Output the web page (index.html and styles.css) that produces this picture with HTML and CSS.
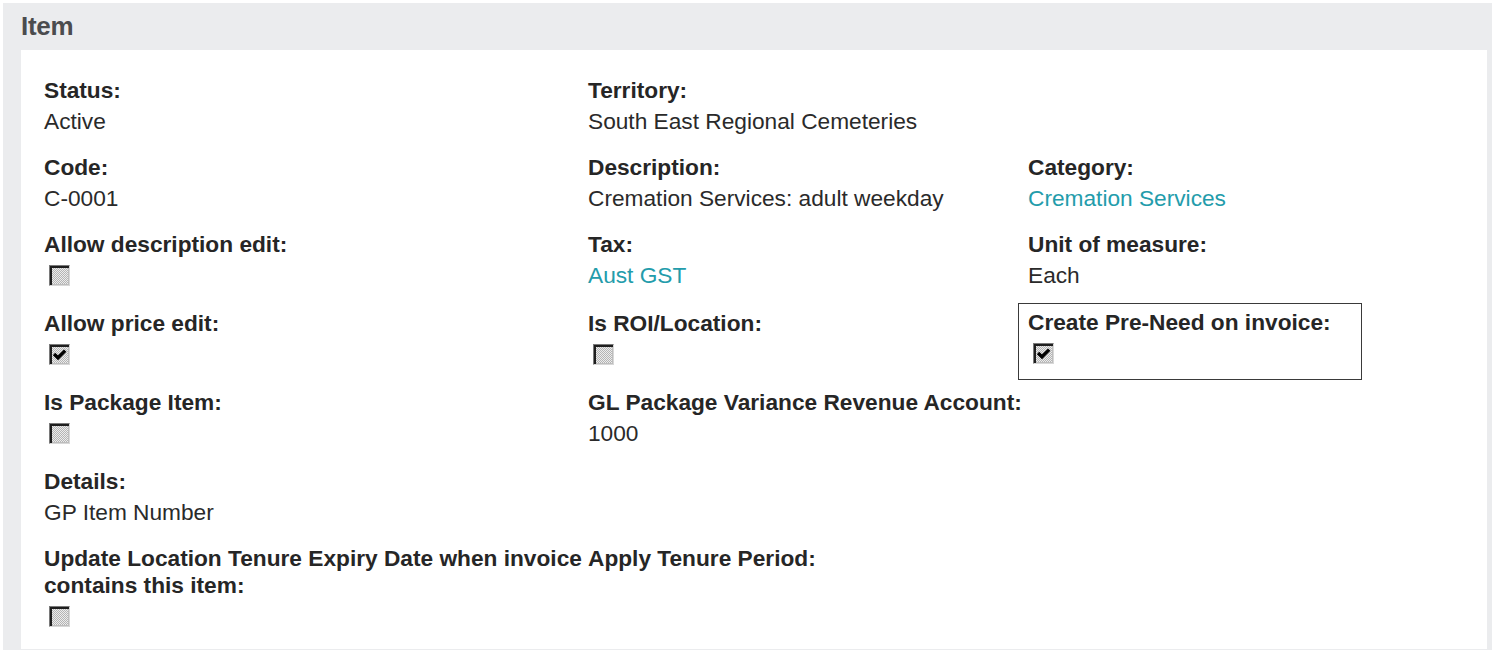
FILE: index.html
```html
<!DOCTYPE html>
<html>
<head>
<meta charset="utf-8">
<link rel="stylesheet" href="styles.css">
</head>
<body>
<div class="panel">
  <div class="panel-head">Item</div>
  <div class="panel-body">
    <div class="grid">
      <div class="cell"><div class="lbl">Status:</div><div class="val">Active</div></div>
      <div class="cell"><div class="lbl">Territory:</div><div class="val">South East Regional Cemeteries</div></div>
      <div class="cell"></div>

      <div class="cell"><div class="lbl">Code:</div><div class="val">C-0001</div></div>
      <div class="cell"><div class="lbl">Description:</div><div class="val">Cremation Services: adult weekday</div></div>
      <div class="cell"><div class="lbl">Category:</div><div class="val"><a class="link" href="#">Cremation Services</a></div></div>

      <div class="cell"><div class="lbl">Allow description edit:</div><div class="val chk"><span class="cb"></span></div></div>
      <div class="cell"><div class="lbl">Tax:</div><div class="val"><a class="link" href="#">Aust GST</a></div></div>
      <div class="cell"><div class="lbl">Unit of measure:</div><div class="val">Each</div></div>

      <div class="cell"><div class="lbl">Allow price edit:</div><div class="val chk"><span class="cb"><svg viewBox="0 0 21 21" width="21" height="21"><path d="M5 10 L9 13.8 L16.2 6.6" fill="none" stroke="#000" stroke-width="3.4"/></svg></span></div></div>
      <div class="cell"><div class="lbl">Is ROI/Location:</div><div class="val chk"><span class="cb"></span></div></div>
      <div class="cell focus"><div class="lbl">Create Pre-Need on invoice:</div><div class="val chk"><span class="cb"><svg viewBox="0 0 21 21" width="21" height="21"><path d="M5 10 L9 13.8 L16.2 6.6" fill="none" stroke="#000" stroke-width="3.4"/></svg></span></div></div>

      <div class="cell"><div class="lbl">Is Package Item:</div><div class="val chk"><span class="cb"></span></div></div>
      <div class="cell wide"><div class="lbl">GL Package Variance Revenue Account:</div><div class="val">1000</div></div>

      <div class="cell"><div class="lbl">Details:</div><div class="val">GP Item Number</div></div>
      <div class="cell"></div>
      <div class="cell"></div>

      <div class="cell"><div class="lbl nowrap">Update Location Tenure Expiry Date when invoice<br>contains this item:</div><div class="val chk"><span class="cb"></span></div></div>
      <div class="cell"><div class="lbl">Apply Tenure Period:</div></div>
      <div class="cell"></div>
    </div>
  </div>
</div>
</body>
</html>
```

FILE: styles.css
```css
html, body {
  margin: 0;
  padding: 0;
  background: #ffffff;
}

body {
  font-family: "Liberation Sans", Arial, sans-serif;
  color: #2b2b2b;
}

.panel {
  margin: 3px 3px 0 3px;
  height: 647px;
  box-sizing: border-box;
  background: #ebecee;
  display: flex;
  flex-direction: column;
}

.panel-head {
  height: 47px;
  box-sizing: border-box;
  padding: 8px 0 0 18px;
  font-size: 26px;
  letter-spacing: -0.3px;
  font-weight: bold;
  color: #4b4c4e;
  line-height: 30px;
}

.panel-body {
  margin: 0 5px 1px 18px;
  flex: 1;
  background: #ffffff;
  padding: 21px 0 0 13px;
  box-sizing: border-box;
}

.grid {
  display: grid;
  grid-template-columns: 544px 440px 344px;
  row-gap: 2px;
  align-items: start;
}

.cell {
  border: 1px solid transparent;
  padding: 5px 0 10px 9px;
  font-size: 22.7px;
}

.cell.wide {
  grid-column: span 2;
}

.cell.focus {
  border-color: #3a3a3a;
  margin-top: -1px;
}

.lbl {
  font-weight: bold;
  line-height: 27px;
  color: #262626;
}

.lbl.nowrap {
  white-space: nowrap;
}

.val {
  margin-top: 4px;
  line-height: 27px;
  color: #2a2a2a;
}

.val.chk {
  height: 29px;
  padding-top: 3px;
  box-sizing: border-box;
}

.link {
  color: #239cab;
  text-decoration: none;
}

.cb {
  display: block;
  width: 21px;
  height: 21px;
  margin-left: 5px;
  box-sizing: border-box;
  position: relative;
  border-style: solid;
  border-width: 1px;
  border-color: #7a7a7a #d8d8d8 #d8d8d8 #7a7a7a;
  box-shadow: inset 2px 2px 0 #1e1e1e, inset -1px -1px 0 #bdbdbd;
  background: repeating-conic-gradient(#b4b4b4 0 25%, #ececec 0 50%) 0 0 / 2px 2px;
}

.cb svg {
  position: absolute;
  left: -1px;
  top: -1px;
}
```
